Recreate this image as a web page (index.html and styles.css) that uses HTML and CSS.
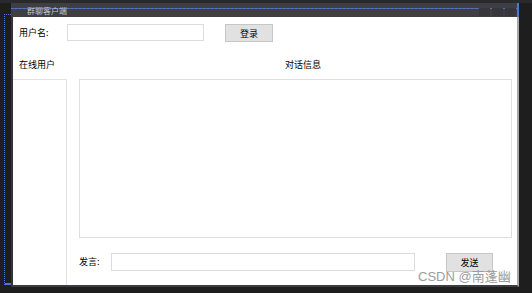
FILE: index.html
```html
<!DOCTYPE html>
<html lang="zh-CN">
<head>
  <meta charset="UTF-8">
  <meta name="viewport" content="width=device-width, initial-scale=1.0">
  <title>群聊客户端</title>
  <link rel="stylesheet" href="styles.css">
</head>
<body>
  <div class="designer">
    <div class="guide"></div>

    <div class="form-window">
      <div class="titlebar">
        <span class="title">群聊客户端</span>
        <div class="caption-buttons">
          <span></span>
          <span></span>
          <span></span>
        </div>
      </div>

      <div class="client">
        <div class="login-row">
          <label for="username">用户名:</label>
          <input type="text" id="username">
          <button class="btn-login">登录</button>
        </div>

        <div class="main">
          <span class="head">在线用户</span>
          <span class="head head-chat">对话信息</span>
          <div class="user-list"></div>
          <div class="chat-col">
            <div class="chat-log"></div>
            <div class="send-row">
              <label for="message">发言:</label>
              <input type="text" id="message">
              <button class="btn-send">发送</button>
            </div>
          </div>
        </div>
      </div>
    </div>
  </div>

  <div class="watermark">CSDN @南蓬幽</div>
</body>
</html>
```

FILE: styles.css
```css
* {
  box-sizing: border-box;
}
body {
  margin: 0;
  height: 293px;
  overflow: hidden;
  background: #1e1e1e;
  font-family: "Noto Sans CJK SC", sans-serif;
  font-size: 9px;
  color: #000;
}
.designer {
  display: flex;
  padding-top: 3px;
  background: linear-gradient(#2a2a2c 0 3px, #1e1e1e 3px);
  height: 293px;
}
.guide {
  width: 7px;
  height: 271px;
  margin-left: 4px;
  margin-top: 11px;
  border-left: 1px dotted #4a78d0;
  border-top: 1px dotted #4a78d0;
  border-bottom: 2px solid #4a78d0;
}
.form-window {
  width: 508px;
  display: flex;
  flex-direction: column;
}
.titlebar {
  height: 14px;
  display: flex;
  justify-content: space-between;
  background-color: #3e3e44;
  background-image: repeating-linear-gradient(90deg, #4a78d0 0 2px, #5d6a85 2px 4px);
  background-size: 100% 1px;
  background-position: 0 5px;
  background-repeat: no-repeat;
  border-right: 2px solid #4a78d0;
}
.title {
  padding-left: 16px;
  padding-top: 1px;
  font-size: 8px;
  line-height: 14px;
  color: #c4c4c8;
}
.caption-buttons {
  display: flex;
  gap: 2px;
  padding: 5px 1px 1px 0;
}
.caption-buttons span {
  width: 11px;
  height: 8px;
  background: #36363b;
}
.client {
  height: 270px;
  overflow: hidden;
  background: #fff;
  border-left: 2px solid #343438;
  border-right: 2px solid #a8a8a8;
  border-bottom: 2px solid #3c3c41;
}
input {
  margin: 0;
  padding: 0 3px;
  border: 1px solid #dcdcdc;
  background: #fff;
  font: inherit;
}
button {
  margin: 0;
  padding: 0;
  background: #e1e1e1;
  border: 1px solid #c6c6c6;
  font: inherit;
  color: #000;
}
label {
  display: block;
}
.login-row {
  display: flex;
  align-items: flex-start;
  padding: 7px 0 0 6px;
}
.login-row label {
  width: 48px;
  line-height: 17px;
}
.login-row input {
  width: 137px;
  height: 17px;
}
.btn-login {
  width: 48px;
  height: 18px;
  margin-left: 21px;
}
.main {
  display: grid;
  grid-template-columns: 54px 433px;
  grid-template-rows: 14px auto;
  column-gap: 12px;
  row-gap: 7px;
  margin-top: 16px;
}
.head {
  line-height: 14px;
  padding-left: 6px;
}
.head-chat {
  padding-left: 206px;
}
.user-list {
  height: 230px;
  border: 1px solid #e2e2e2;
  border-left: none;
}
.chat-log {
  height: 159px;
  border: 1px solid #dedede;
}
.send-row {
  display: flex;
  align-items: flex-start;
  margin-top: 15px;
}
.send-row label {
  width: 32px;
  line-height: 18px;
}
.send-row input {
  width: 304px;
  height: 18px;
}
.btn-send {
  width: 47px;
  height: 19px;
  margin-left: 31px;
}
.watermark {
  position: absolute;
  left: 418px;
  top: 269px;
  font-family: "Liberation Sans", "Noto Sans CJK SC", sans-serif;
  font-size: 13px;
  line-height: 15px;
  color: #9c9c9c;
}
```
